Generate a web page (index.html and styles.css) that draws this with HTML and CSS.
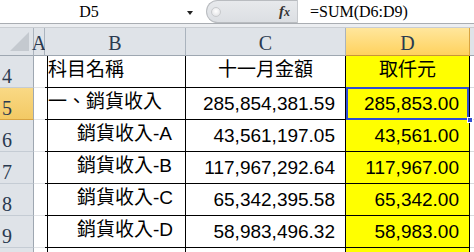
FILE: index.html
```html
<!DOCTYPE html>
<html lang="zh-Hant">
<head>
    <meta charset="UTF-8">
    <title>Sheet1 - 銷貨收入</title>
    <link rel="stylesheet" href="styles.css">
</head>
<body>
    <div class="formula-bar">
        <div class="name-box">
            <span class="name">D5</span>
            <span class="arrow"></span>
        </div>
        <div class="fx-area">
            <span class="knob"></span>
            <span class="fx">f<span class="x">x</span></span>
        </div>
        <div class="formula">=SUM(D6:D9)</div>
    </div>
    <div class="band"></div>

    <div class="sheet">
        <!-- column headers -->
        <div class="corner"><span class="tri"></span></div>
        <div class="col-head">A</div>
        <div class="col-head">B</div>
        <div class="col-head">C</div>
        <div class="col-head active">D</div>
        <div class="col-head last"></div>

        <!-- row 4 -->
        <div class="row-head">4</div>
        <div class="cell a"></div>
        <div class="cell b cjk">科目名稱</div>
        <div class="cell c cjk center">十一月金額</div>
        <div class="cell d cjk center">取仟元</div>
        <div class="cell e"></div>

        <!-- row 5 -->
        <div class="row-head active">5</div>
        <div class="cell a"></div>
        <div class="cell b cjk">一、銷貨收入</div>
        <div class="cell c num">285,854,381.59</div>
        <div class="cell d num selected">285,853.00<span class="sel"></span><span class="handle"></span></div>
        <div class="cell e"></div>

        <!-- row 6 -->
        <div class="row-head">6</div>
        <div class="cell a"></div>
        <div class="cell b cjk indent">銷貨收入-A</div>
        <div class="cell c num">43,561,197.05</div>
        <div class="cell d num">43,561.00</div>
        <div class="cell e"></div>

        <!-- row 7 -->
        <div class="row-head">7</div>
        <div class="cell a"></div>
        <div class="cell b cjk indent">銷貨收入-B</div>
        <div class="cell c num">117,967,292.64</div>
        <div class="cell d num">117,967.00</div>
        <div class="cell e"></div>

        <!-- row 8 -->
        <div class="row-head">8</div>
        <div class="cell a"></div>
        <div class="cell b cjk indent">銷貨收入-C</div>
        <div class="cell c num">65,342,395.58</div>
        <div class="cell d num">65,342.00</div>
        <div class="cell e"></div>

        <!-- row 9 -->
        <div class="row-head">9</div>
        <div class="cell a"></div>
        <div class="cell b cjk indent">銷貨收入-D</div>
        <div class="cell c num">58,983,496.32</div>
        <div class="cell d num">58,983.00</div>
        <div class="cell e"></div>

        <!-- row 10, only its top edge is in view -->
        <div class="row-head"></div>
        <div class="cell a"></div>
        <div class="cell b"></div>
        <div class="cell c"></div>
        <div class="cell d"></div>
        <div class="cell e"></div>
    </div>
</body>
</html>
```

FILE: styles.css
```css
/* Basic styling */
* {
    margin: 0;
    padding: 0;
    box-sizing: border-box;
}

body {
    width: 474px;
    height: 252px;
    overflow: hidden;
    background-color: #ffffff;
    font-family: "Liberation Sans", "Noto Sans CJK TC", sans-serif;
    color: #000;
}

/* formula bar */
.formula-bar {
    display: flex;
    height: 23px;
    background-color: #ffffff;
}

.name-box {
    width: 206px;
    display: flex;
    align-items: center;
}

.name {
    width: 178px;
    text-align: center;
    font-family: "Liberation Serif", serif;
    font-size: 16px;
    padding-top: 1px;
}

.arrow {
    margin-left: 9px;
    margin-top: 2px;
    width: 0;
    height: 0;
    border-left: 3px solid transparent;
    border-right: 3px solid transparent;
    border-top: 4px solid #222;
}

.fx-area {
    width: 91px;
    display: flex;
    align-items: center;
    justify-content: space-between;
    padding: 0 7px 0 4px;
    background: linear-gradient(#e7e9ec, #dcdfe3);
    border: 1px solid #b9bcc0;
    border-right: none;
    border-radius: 12px 0 0 12px;
}

.knob {
    width: 10px;
    height: 10px;
    border-radius: 50%;
    background: radial-gradient(circle at 50% 40%, #ffffff, #dcdde0);
    border: 1px solid #c8cacd;
}

.fx {
    font-family: "Liberation Serif", serif;
    font-style: italic;
    font-weight: bold;
    font-size: 15px;
    color: #333;
}

.fx .x {
    font-size: 12px;
}

.formula {
    flex-grow: 1;
    border-left: 1px solid #c6c9cd;
    padding-left: 12px;
    font-family: "Liberation Serif", serif;
    font-size: 16px;
    line-height: 23px;
}

.band {
    height: 5px;
    background-color: #eceef1;
    border-top: 1px solid #a9adb2;
    border-bottom: 1px solid #c9cdd2;
}

/* sheet grid */
.sheet {
    display: grid;
    grid-template-columns: 34px 11px 141px 160px 124px 1fr;
    grid-template-rows: 28px;
    grid-auto-rows: 32px;
}

.corner,
.col-head,
.row-head {
    background-color: #dfe3e8;
    font-family: "Liberation Serif", serif;
    font-size: 20px;
    color: #2a3a50;
}

.corner {
    border-right: 1px solid #aab3bd;
    border-bottom: 1px solid #9ea7b1;
    display: flex;
    align-items: flex-end;
    justify-content: flex-end;
    padding: 0 4px 4px 0;
}

.tri {
    width: 0;
    height: 0;
    border-left: 19px solid transparent;
    border-bottom: 19px solid #c4c9cf;
}

.col-head {
    border-right: 1px solid #aab3bd;
    border-bottom: 1px solid #9ea7b1;
    display: flex;
    align-items: flex-end;
    justify-content: center;
    line-height: 22px;
    padding-bottom: 1px;
}

.col-head.active {
    background: linear-gradient(#ffe69c, #ffd25e);
    border-right-color: #d9a441;
    border-bottom-color: #c8953a;
}

.col-head.last {
    border-right: none;
}

.row-head {
    border-right: 1px solid #9ea7b1;
    border-bottom: 1px solid #c5ccd4;
    display: flex;
    align-items: flex-end;
    padding-left: 2px;
    line-height: 22px;
}

.row-head.active {
    background: linear-gradient(#f9d985, #f3c964);
    border-bottom-color: #d9a441;
}

.cell {
    border-right: 1px solid #000;
    border-bottom: 1px solid #000;
    display: flex;
    align-items: flex-end;
    font-size: 19px;
    line-height: 22px;
    padding: 0 10px 4px 3px;
    white-space: nowrap;
}

.cell.a {
    border-bottom: 1px solid #e2e4e7;
}

.cell.e {
    border-right: none;
    border-bottom: 1px solid #d8dbdf;
}

.cell.d {
    background-color: #ffff00;
}

.cell.cjk {
    padding-bottom: 6px;
}

.cell.indent {
    padding-left: 32px;
}

.cell.center {
    justify-content: center;
    padding-left: 0;
    padding-right: 0;
}

.cell.num {
    justify-content: flex-end;
}

.cell.selected {
    position: relative;
}

.sel {
    position: absolute;
    top: -1px;
    left: 0;
    right: 0;
    bottom: -1px;
    border: 2px solid #2f4cd3;
}

.handle {
    position: absolute;
    right: -4px;
    bottom: -4px;
    width: 6px;
    height: 6px;
    background-color: #2f4cd3;
    border: 1px solid #ffffff;
    z-index: 2;
}
```
